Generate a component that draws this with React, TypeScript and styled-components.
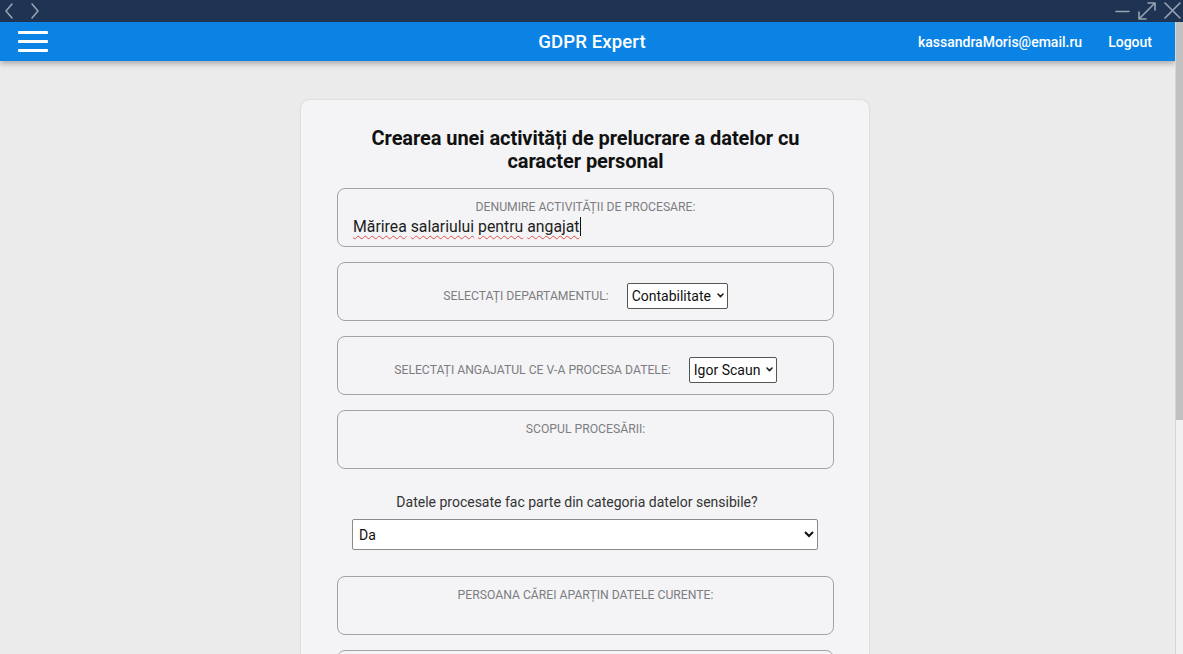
import React from "react";
import styled, { createGlobalStyle } from "styled-components";

const Global = createGlobalStyle`
  html, body { margin: 0; padding: 0; overflow: hidden; }
  body { font-family: Roboto, "Noto Sans", Arial, sans-serif; background: #1e3350; }
  * { box-sizing: border-box; }
`;

const Window = styled.div`
  width: 1183px;
  height: 654px;
  display: flex;
  flex-direction: column;
`;

const Chrome = styled.div`
  height: 22px;
  flex: none;
  background: #1f3452;
  display: flex;
  align-items: center;
  justify-content: space-between;
  padding: 0 2px 0 3px;
`;

const ChromeGroup = styled.div<{ $gap: number }>`
  display: flex;
  align-items: center;
  gap: ${(p) => p.$gap}px;
`;

const Body = styled.div`
  flex: 1;
  min-height: 0;
  display: flex;
`;

const Viewport = styled.div`
  flex: 1;
  min-width: 0;
  overflow: hidden;
  background: #ebebeb;
`;

const ScrollTrack = styled.div`
  width: 8px;
  flex: none;
  background: #f1f1f1;
  border-left: 1px solid #d6d6d6;
  display: flex;
  flex-direction: column;
`;

const ScrollThumb = styled.div`
  height: 398px;
  background: #c1c1c1;
`;

const AppBar = styled.header`
  height: 39px;
  background: #0a83e5;
  display: grid;
  grid-template-columns: 1fr auto 1fr;
  align-items: center;
  padding: 0 23px 0 18px;
  box-shadow: 0 3px 5px rgba(0, 0, 0, 0.25);
  color: #fff;
  position: relative;
`;

const Burger = styled.button`
  width: 30px;
  height: 21px;
  padding: 0;
  border: 0;
  background: transparent;
  display: flex;
  flex-direction: column;
  justify-content: space-between;
  cursor: pointer;
  span {
    display: block;
    height: 3px;
    background: #fff;
    border-radius: 1px;
  }
`;

const Brand = styled.div`
  font-size: 18.6px;
  font-weight: 500;
  letter-spacing: 0.1px;
  margin-left: 14px;
`;

const UserArea = styled.div`
  justify-self: end;
  display: flex;
  align-items: center;
  gap: 26px;
  font-size: 14px;
  font-weight: 500;
`;

const Main = styled.main`
  padding: 39px 0 17px;
  display: flex;
  justify-content: center;
`;

const Card = styled.section`
  width: 568px;
  margin-right: 5px;
  background: #f4f4f6;
  border-radius: 8px;
  box-shadow: 0 0 2px rgba(0, 0, 0, 0.18);
  padding: 27px 35px 20px 36px;
  display: flex;
  flex-direction: column;
`;

const Title = styled.h1`
  margin: 0 0 15px;
  font-size: 20px;
  line-height: 23px;
  font-weight: 700;
  letter-spacing: -0.07px;
  color: #111;
  text-align: center;
  padding: 0 30px;
`;

const Fields = styled.div`
  display: flex;
  flex-direction: column;
  gap: 15px;
`;

const Field = styled.div<{ $inline?: boolean }>`
  height: 59px;
  flex: none;
  border: 1px solid #a3a3a6;
  border-radius: 8px;
  display: flex;
  flex-direction: ${(p) => (p.$inline ? "row" : "column")};
  align-items: ${(p) => (p.$inline ? "center" : "stretch")};
  justify-content: ${(p) => (p.$inline ? "center" : "flex-start")};
  gap: ${(p) => (p.$inline ? "18px" : "2px")};
  padding: ${(p) => (p.$inline ? "8px 15px 0" : "10px 15px 0")};
`;

const Label = styled.label`
  font-size: 12.2px;
  line-height: 16px;
  color: #7d7d81;
  text-transform: uppercase;
  text-align: center;
`;

const TextValue = styled.div`
  font-size: 15.8px;
  line-height: 20px;
  color: #1d1d1d;
  white-space: pre;
`;

const Misspelled = styled.span`
  text-decoration: underline wavy #e05050;
  text-decoration-thickness: 1px;
  text-underline-offset: 3px;
`;

const Caret = styled.span`
  display: inline-block;
  width: 1px;
  height: 19px;
  background: #111;
  vertical-align: -4px;
`;

const SelectWrap = styled.span`
  position: relative;
  display: inline-flex;
`;

const InlineSelect = styled.select`
  appearance: none;
  font-family: Roboto, Arial, sans-serif;
  font-size: 14px;
  color: #111;
  height: 26px;
  padding: 0 15px 0 4px;
  background: #fff;
  border: 1px solid #555;
  border-radius: 2px;
  outline: none;
`;

const Chevron = styled.svg`
  position: absolute;
  right: 4px;
  top: 50%;
  margin-top: -3px;
  pointer-events: none;
`;

const Question = styled.div`
  margin: 24px 0 8px;
  padding-right: 17px;
  text-align: center;
  font-size: 14px;
  line-height: 18px;
  color: #333;
`;

const WideSelect = styled.select`
  margin: 0 16px 26px 15px;
  height: 31px;
  font-family: Roboto, Arial, sans-serif;
  font-size: 14px;
  color: #111;
  padding: 0 5px 0 2px;
  background: #fff;
  border: 1px solid #8a8a8a;
  border-radius: 2px;
`;

const Submit = styled.button`
  margin-top: 17px;
  align-self: center;
  height: 36px;
  padding: 0 22px;
  border: 0;
  border-radius: 4px;
  background: #0a83e5;
  color: #fff;
  font-family: Roboto, Arial, sans-serif;
  font-size: 14px;
  font-weight: 500;
  text-transform: uppercase;
`;

const Icon = ({ children, w, h }: { children: React.ReactNode; w: number; h: number }) => (
  <svg width={w} height={h} viewBox={`0 0 ${w} ${h}`} fill="none" stroke="#97a3b3" strokeWidth={1.6} strokeLinecap="round" strokeLinejoin="round">
    {children}
  </svg>
);

const SmallSelect = ({ value, options }: { value: string; options: string[] }) => (
  <SelectWrap>
    <InlineSelect defaultValue={value}>
      {options.map((o) => (
        <option key={o}>{o}</option>
      ))}
    </InlineSelect>
    <Chevron width="7" height="5" viewBox="0 0 7 5" fill="none" stroke="#222" strokeWidth="1.6" strokeLinecap="round" strokeLinejoin="round">
      <path d="M1 1 L3.5 3.6 L6 1" />
    </Chevron>
  </SelectWrap>
);

export default function App() {
  return (
    <>
      <Global />
      <Window>
        <Chrome>
          <ChromeGroup $gap={14}>
            <Icon w={12} h={18}><path d="M9 2 L3 9 L9 16" /></Icon>
            <Icon w={12} h={18}><path d="M3 2 L9 9 L3 16" /></Icon>
          </ChromeGroup>
          <ChromeGroup $gap={6}>
            <Icon w={18} h={18}><path d="M3 9.5 H16" /></Icon>
            <Icon w={20} h={20}><path d="M2 18 L18 2 M11 2 H18 V9 M2 11 V18 H9" /></Icon>
            <Icon w={18} h={18}><path d="M2 1 L17 16 M17 1 L2 16" /></Icon>
          </ChromeGroup>
        </Chrome>
        <Body>
          <Viewport>
            <AppBar>
              <Burger aria-label="Meniu">
                <span />
                <span />
                <span />
              </Burger>
              <Brand>GDPR Expert</Brand>
              <UserArea>
                <span>kassandraMoris@email.ru</span>
                <span>Logout</span>
              </UserArea>
            </AppBar>
            <Main>
              <Card>
                <Title>Crearea unei activități de prelucrare a datelor cu caracter personal</Title>
                <Fields>
                  <Field>
                    <Label>Denumire activității de procesare:</Label>
                    <TextValue>
                      <Misspelled>Mărirea</Misspelled> <Misspelled>salariului</Misspelled>{" "}
                      <Misspelled>pentru</Misspelled> <Misspelled>angajat</Misspelled>
                      <Caret />
                    </TextValue>
                  </Field>
                  <Field $inline>
                    <Label>Selectați departamentul:</Label>
                    <SmallSelect value="Contabilitate" options={["Contabilitate", "IT", "Juridic"]} />
                  </Field>
                  <Field $inline>
                    <Label>Selectați angajatul ce v-a procesa datele:</Label>
                    <SmallSelect value="Igor Scaun" options={["Igor Scaun", "Ion Rusu"]} />
                  </Field>
                  <Field>
                    <Label>Scopul procesării:</Label>
                  </Field>
                </Fields>
                <Question>Datele procesate fac parte din categoria datelor sensibile?</Question>
                <WideSelect defaultValue="Da">
                  <option>Da</option>
                  <option>Nu</option>
                </WideSelect>
                <Fields>
                  <Field>
                    <Label>Persoana cărei aparțin datele curente:</Label>
                  </Field>
                  <Field>
                    <Label>Temeiul legal al procesării:</Label>
                  </Field>
                  <Field>
                    <Label>Termenul de stocare a datelor:</Label>
                  </Field>
                  <Field>
                    <Label>Destinatarii datelor:</Label>
                  </Field>
                </Fields>
                <Submit>Salvează</Submit>
              </Card>
            </Main>
          </Viewport>
          <ScrollTrack>
            <ScrollThumb />
          </ScrollTrack>
        </Body>
      </Window>
    </>
  );
}
